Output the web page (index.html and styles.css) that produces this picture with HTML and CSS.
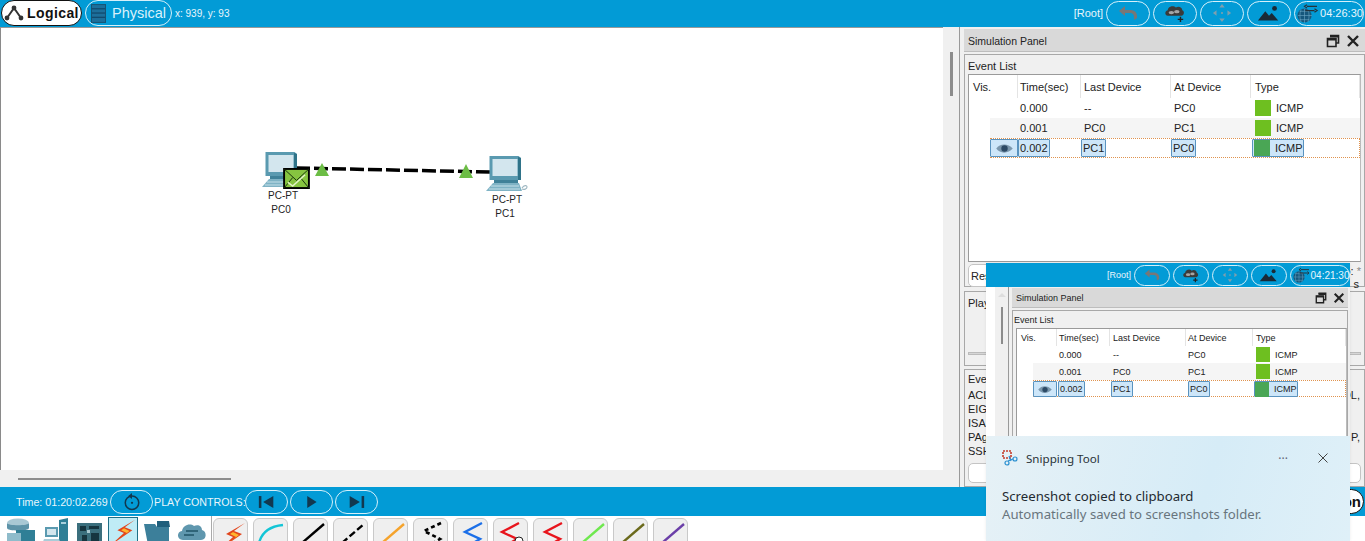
FILE: index.html
```html
<!DOCTYPE html>
<html lang="en">
<head>
<meta charset="utf-8">
<title>Packet Tracer Simulation</title>
<link rel="stylesheet" href="styles.css">
</head>
<body>
<svg class="defs" width="0" height="0" aria-hidden="true">
  <defs>
    <symbol id="i-logical" viewBox="0 0 20 18"><path d="M10 4 3 14M10 4l7 10" fill="none" stroke="#333" stroke-width="2"/><circle cx="10" cy="4" r="2.4" fill="#333"/><circle cx="3" cy="14" r="2.4" fill="#333"/><circle cx="17" cy="14" r="2.4" fill="#333"/></symbol>
    <symbol id="i-physical" viewBox="0 0 16 20"><rect x=".5" y=".5" width="15" height="19" fill="#1d6f9b" stroke="#1a4f6e"/><path d="M1 5h14M1 9.500h14M1 14h14" stroke="#0d3d5c"/></symbol>
    <symbol id="i-undo" viewBox="0 0 24 20"><path d="M9 3 3 8l6 5V10h5c3 0 4 2 4 4v3l3-2v-2c0-4-3-6-7-6H9z" fill="#777"/></symbol>
    <symbol id="i-cloud" viewBox="0 0 26 22"><path d="M5 14c-3 0-4-5 0-6 0-4 6-6 9-3 3-2 7 0 7 3 3 1 2 6-1 6z" fill="#3a3a3a"/><ellipse cx="9" cy="10.500" rx="3" ry="1.800" fill="#a5a5a5"/><ellipse cx="15" cy="9.500" rx="3" ry="1.800" fill="#a5a5a5"/><path d="M19 15v6M16 18h6" stroke="#222" stroke-width="1.600"/></symbol>
    <symbol id="i-move" viewBox="0 0 22 22"><path d="M11 1l3 4H8zM11 21l-3-4h6zM1 11l4-3v6zM21 11l-4 3V8z" fill="#7f9fae"/><circle cx="11" cy="11" r="1.200" fill="#7f9fae"/></symbol>
    <symbol id="i-image" viewBox="0 0 26 20"><path d="M1 18 9 8l4 5 3-3 7 8z" fill="#1a2a36"/><circle cx="19" cy="5" r="2.600" fill="#1a2a36"/></symbol>
    <symbol id="i-globe" viewBox="0 0 26 24"><circle cx="10" cy="15" r="8.500" fill="#16577c"/><path d="M2 15h17M10 7v17M4 10h12M4 20h12M6 8c-2 4-2 10 0 15M14 8c2 4 2 10 0 15" stroke="#6fa9c6" stroke-width=".7" fill="none"/><path d="M13 4h12M13 2l-3 2 3 2M11 9h11M22 7l3 2-3 2" stroke="#26323a" stroke-width="1.500" fill="none"/></symbol>
    <symbol id="i-reset" viewBox="0 0 24 24"><circle cx="12" cy="13" r="9" fill="none" stroke="#12384f" stroke-width="2"/><circle cx="12" cy="13" r="1.500" fill="#12384f"/><path d="M12 0l-5 4 5 4z" fill="#12384f"/></symbol>
    <symbol id="i-back" viewBox="0 0 20 16"><rect x="1" y="1" width="3" height="14" fill="#12384f"/><path d="M18 1v14L6 8z" fill="#12384f"/></symbol>
    <symbol id="i-play" viewBox="0 0 20 16"><path d="M5 1v14l11-7z" fill="#12384f"/></symbol>
    <symbol id="i-next" viewBox="0 0 20 16"><rect x="16" y="1" width="3" height="14" fill="#12384f"/><path d="M2 1v14l12-7z" fill="#12384f"/></symbol>
    <symbol id="i-pc" viewBox="0 0 42 38"><path d="M3.500 1h29l2.500 2v22H3.500z" fill="#5a9ab0"/><path d="M6.500 4h25v17h-25z" fill="#d3e6ee"/><path d="M32 2l3 1v22h-3z" fill="#2f7389"/><path d="M8 25h24v3H8z" fill="#3f8198"/><path d="M7 28h26l3 8H0z" fill="#7fb3c5"/><path d="M5 31h28M3 34h31" stroke="#c5e0e9"/><path d="M36 33c2-3 5-3 5-1s-3 3-5 2" fill="none" stroke="#9db6c0" stroke-width="1.200"/></symbol>
    <symbol id="i-mail" viewBox="0 0 28 22"><rect x="1" y="1" width="26" height="20" fill="#86c440" stroke="#000" stroke-width="2"/><path d="M1 1l13 12L27 1M1 21l9-11M27 21l-9-11" stroke="#16300c" fill="none"/><path d="M5 15l5 4L23 7" stroke="#e4f5c8" fill="none" stroke-width="1.500"/></symbol>
    <symbol id="i-eye" viewBox="0 0 20 12"><path d="M1 6c4-6 13-6 18 0-5 6-14 6-18 0z" fill="#7b97ad"/><circle cx="10" cy="6" r="3.500" fill="#2c4a66"/></symbol>
    <symbol id="i-restore" viewBox="0 0 14 14"><path d="M4 1.500h8.500V9H10M1.500 4.500H10V12.500H1.500z" fill="none" stroke="#222" stroke-width="1.600"/><path d="M4 2.500h8.500M1.500 5.500H10" stroke="#222" stroke-width="2"/></symbol>
    <symbol id="i-close" viewBox="0 0 14 14"><path d="M2 2l10 10M12 2 2 12" stroke="#222" stroke-width="2.400"/></symbol>
    <symbol id="i-bolt" viewBox="0 0 30 30"><path d="M28 2 9 13l7 3L2 29l23-16-8-3z" fill="#e2451c"/><path d="M22 7l-9 6 6 3-9 7 12-9-6-3z" fill="#ffb52e"/></symbol>
  </defs>
</svg>

<header class="topbar">
  <button class="pill pill-logical"><svg class="ico-logical"><use href="#i-logical"/></svg>Logical</button>
  <button class="pill pill-physical"><svg class="ico-physical"><use href="#i-physical"/></svg>Physical</button>
  <span class="coords">x: 939, y: 93</span>
  <span class="root">[Root]</span>
  <button class="pill pill-nav"><svg class="ico-nav"><use href="#i-undo"/></svg></button>
  <button class="pill pill-nav"><svg class="ico-nav"><use href="#i-cloud"/></svg></button>
  <button class="pill pill-nav"><svg class="ico-nav"><use href="#i-move"/></svg></button>
  <button class="pill pill-nav"><svg class="ico-nav"><use href="#i-image"/></svg></button>
  <button class="pill pill-clock"><svg class="ico-nav"><use href="#i-globe"/></svg>04:26:30</button>
</header>

<main class="workspace">
  <section class="canvas-wrap">
    <div class="canvas">
      <svg class="link" width="943" height="443"><path d="M296 141 490 145" stroke="#000" stroke-width="3.500" stroke-dasharray="14 4" fill="none"/><path d="M322 136l7 13h-14zM466 137l7 14h-14z" fill="#6cbd45"/></svg>
      <div class="node node-a"><svg class="pc"><use href="#i-pc"/></svg><span>PC-PT</span><span>PC0</span></div>
      <div class="node node-b"><svg class="pc"><use href="#i-pc"/></svg><span>PC-PT</span><span>PC1</span></div>
      <svg class="envelope"><use href="#i-mail"/></svg>
    </div>
    <div class="hscroll"><span class="hthumb"></span></div>
  </section>
  <div class="vscroll"><span class="vthumb"></span></div>

  <aside class="side">
    <div class="panel-head"><span>Simulation Panel</span><svg class="ico-win"><use href="#i-restore"/></svg><svg class="ico-win"><use href="#i-close"/></svg></div>
    <section class="group group-events">
      <div class="group-label">Event List</div>
      <div class="evt">
        <div class="evt-row evt-head"><span class="c-vis">Vis.</span><span class="c-time">Time(sec)</span><span class="c-last">Last Device</span><span class="c-at">At Device</span><span class="c-type">Type</span></div>
        <div class="evt-row"><span class="c-pad"></span><span class="c-eye"></span><span class="c-time">0.000</span><span class="c-last">--</span><span class="c-at">PC0</span><span class="c-type"><i class="swatch"></i>ICMP</span></div>
        <div class="evt-row evt-alt"><span class="c-pad"></span><span class="c-eye"></span><span class="c-time">0.001</span><span class="c-last">PC0</span><span class="c-at">PC1</span><span class="c-type"><i class="swatch"></i>ICMP</span></div>
        <div class="evt-row evt-sel"><span class="c-eye hl"><svg class="eye"><use href="#i-eye"/></svg></span><span class="c-time"><b class="hl">0.002</b></span><span class="c-last"><b class="hl">PC1</b></span><span class="c-at"><b class="hl">PC0</b></span><span class="c-type"><b class="hl hl-type"><i class="swatch swatch-dark"></i>ICMP</b></span></div>
      </div>
      <div class="reset-row">
        <button class="soft-btn reset-btn">Reset Simulation</button>
        <div class="capture"><span>o: <em>*</em></span><span class="capture-unit">s</span></div>
      </div>
    </section>
    <section class="group group-play">
      <div class="group-label">Playback</div>
      <span class="slider"></span>
    </section>
    <section class="group group-filter">
      <div class="group-label">Events</div>
      <div class="filter-line"><span>ACL Filter</span><span>OL,</span></div>
      <div class="filter-line"><span>EIGRP</span></div>
      <div class="filter-line"><span>ISAKMP</span></div>
      <div class="filter-line"><span>PAgP</span><span>P,</span></div>
      <div class="filter-line"><span>SSH</span></div>
      <button class="soft-btn filter-btn">Edit Filters</button>
    </section>
  </aside>
</main>

<footer class="playbar">
  <span class="time">Time: 01:20:02.269</span>
  <button class="pill pill-ctl pill-reset"><svg class="ico-reset"><use href="#i-reset"/></svg></button>
  <span class="play-label">PLAY CONTROLS:</span>
  <button class="pill pill-ctl"><svg class="ico-ctl"><use href="#i-back"/></svg></button>
  <button class="pill pill-ctl"><svg class="ico-ctl"><use href="#i-play"/></svg></button>
  <button class="pill pill-ctl"><svg class="ico-ctl"><use href="#i-next"/></svg></button>
  <button class="pill pill-sim">Simulation</button>
</footer>

<nav class="toolbar">
  <div class="cats">
    <svg class="cat cat-a" viewBox="0 0 31 27" preserveAspectRatio="xMinYMin"><ellipse cx="13" cy="5" rx="11" ry="4.500" fill="#a9c8d4"/><path d="M2 5v5c0 3.500 22 3.500 22 0V5c0 3-22 3-22 0z" fill="#5d93a8"/><path d="M11 12h19v14H11z" fill="#2f7f96"/><path d="M2 15h14v11H2z" fill="#8fbccb"/></svg>
    <svg class="cat cat-b" viewBox="0 0 29 27" preserveAspectRatio="xMinYMin"><path d="M17 2l9-2v27h-9z" fill="#2f7f96"/><path d="M19 4h5v2h-5z" fill="#a9d0dc"/><path d="M3 9h13v10H3z" fill="#5a9ab0"/><path d="M5 11h9v6H5z" fill="#d3e6ee"/><path d="M2 21h15l2 5H0z" fill="#a9ccd8"/></svg>
    <svg class="cat cat-c" viewBox="0 0 25 27" preserveAspectRatio="xMinYMin"><path d="M0 5h25v22H0z" fill="#3b6f7d"/><path d="M3 8h6v5H3zM12 8h10v3H12zM5 17h5v6H5zM14 15h8v8h-8z" fill="#16353f"/><path d="M10 12h3v3h-3z" fill="#a9c8d0"/></svg>
    <span class="cat-active"><svg class="cat-bolt"><use href="#i-bolt"/></svg></span>
    <svg class="cat cat-d" viewBox="0 0 27 27" preserveAspectRatio="xMinYMin"><path d="M0 6h11l2 3h12v18H4z" fill="#3c7f9a"/><path d="M13 3h12l1 6H13z" fill="#1f5f7c"/></svg>
    <svg class="cat cat-e" viewBox="0 0 29 27" preserveAspectRatio="xMinYMin"><path d="M6 22c-6 0-7-8-1-9 1-6 8-8 12-5 4-2 8 0 8 4 5 1 5 10-1 10z" fill="#5f97ae"/><path d="M9 13h12M7 17h10" stroke="#2f6478" stroke-width="2"/></svg>
  </div>
  <div class="conns">
    <span class="conn"><svg class="conn-svg" viewBox="0 0 33 30"><use href="#i-bolt" x="3" y="2" width="30" height="30"/></svg></span>
    <span class="conn"><svg class="conn-svg" viewBox="0 0 33 30"><path d="M5 24Q9 8 29 6" stroke="#13c5d6" stroke-width="2.400" fill="none"/></svg></span>
    <span class="conn"><svg class="conn-svg" viewBox="0 0 33 30"><path d="M8 24 30 5" stroke="#000" stroke-width="2.400"/></svg></span>
    <span class="conn"><svg class="conn-svg" viewBox="0 0 33 30"><path d="M8 24 30 5" stroke="#000" stroke-width="2.400" stroke-dasharray="7 3"/></svg></span>
    <span class="conn"><svg class="conn-svg" viewBox="0 0 33 30"><path d="M8 24 30 5" stroke="#f5a32c" stroke-width="2.400"/></svg></span>
    <span class="conn"><svg class="conn-svg" viewBox="0 0 33 30"><path d="M27 4 10 12l16 8-10 6" stroke="#000" stroke-width="2.600" fill="none" stroke-dasharray="4 3"/></svg></span>
    <span class="conn"><svg class="conn-svg" viewBox="0 0 33 30"><path d="M28 4 11 13l15 7-10 6" stroke="#1b6fe8" stroke-width="2.400" fill="none"/></svg></span>
    <span class="conn"><svg class="conn-svg" viewBox="0 0 33 30"><path d="M25 4 8 13l15 7-10 6" stroke="#e8141c" stroke-width="2.400" fill="none"/><circle cx="25" cy="22" r="4" fill="#fff" stroke="#222"/></svg></span>
    <span class="conn"><svg class="conn-svg" viewBox="0 0 33 30"><path d="M28 4 11 13l15 7-10 6" stroke="#e8141c" stroke-width="2.400" fill="none"/></svg></span>
    <span class="conn"><svg class="conn-svg" viewBox="0 0 33 30"><path d="M8 24 30 5" stroke="#6fe84f" stroke-width="2.400"/></svg></span>
    <span class="conn"><svg class="conn-svg" viewBox="0 0 33 30"><path d="M8 24 30 5" stroke="#6b6a1c" stroke-width="2.400"/></svg></span>
    <span class="conn"><svg class="conn-svg" viewBox="0 0 33 30"><path d="M8 24 30 5" stroke="#6b3fa8" stroke-width="2.400"/></svg></span>
  </div>
</nav>

<!-- pasted screenshot window lying over the panel -->
<section class="overlay">
  <div class="ov-bar">
    <span class="root ov-root">[Root]</span>
    <button class="pill ov-pill"><svg class="ico-ov"><use href="#i-undo"/></svg></button>
    <button class="pill ov-pill"><svg class="ico-ov"><use href="#i-cloud"/></svg></button>
    <button class="pill ov-pill"><svg class="ico-ov"><use href="#i-move"/></svg></button>
    <button class="pill ov-pill"><svg class="ico-ov"><use href="#i-image"/></svg></button>
    <button class="pill ov-clock"><svg class="ico-ov"><use href="#i-globe"/></svg>04:21:30</button>
  </div>
  <div class="ov-body">
    <div class="ov-scroll"><span class="ov-arrow"></span><span class="ov-thumb"></span></div>
    <div class="ov-side">
      <div class="panel-head ov-head"><span>Simulation Panel</span><svg class="ico-win"><use href="#i-restore"/></svg><svg class="ico-win"><use href="#i-close"/></svg></div>
      <section class="group ov-group">
        <div class="group-label">Event List</div>
        <div class="evt evt-small">
          <div class="evt-row evt-head"><span class="c-vis">Vis.</span><span class="c-time">Time(sec)</span><span class="c-last">Last Device</span><span class="c-at">At Device</span><span class="c-type">Type</span></div>
          <div class="evt-row"><span class="c-pad"></span><span class="c-eye"></span><span class="c-time">0.000</span><span class="c-last">--</span><span class="c-at">PC0</span><span class="c-type"><i class="swatch"></i>ICMP</span></div>
          <div class="evt-row evt-alt"><span class="c-pad"></span><span class="c-eye"></span><span class="c-time">0.001</span><span class="c-last">PC0</span><span class="c-at">PC1</span><span class="c-type"><i class="swatch"></i>ICMP</span></div>
          <div class="evt-row evt-sel"><span class="c-eye hl"><svg class="eye"><use href="#i-eye"/></svg></span><span class="c-time"><b class="hl">0.002</b></span><span class="c-last"><b class="hl">PC1</b></span><span class="c-at"><b class="hl">PC0</b></span><span class="c-type"><b class="hl hl-type"><i class="swatch swatch-dark"></i>ICMP</b></span></div>
        </div>
      </section>
    </div>
  </div>
  <div class="toast">
    <div class="toast-head">
      <svg class="toast-ico" viewBox="0 0 16 16"><path d="M1 1h8v7H1z" fill="none" stroke="#c43d2b" stroke-width="1.600" stroke-dasharray="2 1"/><circle cx="5" cy="13" r="2" fill="none" stroke="#2a8fd0" stroke-width="1.200"/><circle cx="13" cy="9" r="2" fill="none" stroke="#2a8fd0" stroke-width="1.200"/><path d="M6 11l5-2M7 6l2 5" stroke="#2a8fd0" stroke-width="1.200"/></svg>
      <span class="toast-app">Snipping Tool</span>
      <span class="toast-more">···</span>
      <svg class="toast-x" viewBox="0 0 10 10"><path d="M.5.500l9 9M9.500.500l-9 9" stroke="#444" fill="none"/></svg>
    </div>
    <div class="toast-title">Screenshot copied to clipboard</div>
    <div class="toast-sub">Automatically saved to screenshots folder.</div>
  </div>
</section>
</body>
</html>
```

FILE: styles.css
```css
* { box-sizing: border-box; }
html, body { margin: 0; height: 541px; overflow: hidden; }
body {
  position: relative;
  display: flex;
  flex-direction: column;
  font-family: "Liberation Sans", Arial, sans-serif;
  font-size: 11px;
  color: #222;
  background: #f0f0f0;
}
.defs { position: absolute; }
button { font-family: inherit; padding: 0; cursor: default; }

/* shared pill button */
.pill {
  display: flex;
  align-items: center;
  justify-content: center;
  flex: none;
  background: transparent;
  border: 1px solid #d6f0fa;
  border-radius: 13px;
  color: #e8f6fc;
}

/* top bar */
.topbar {
  flex: none;
  height: 27px;
  display: flex;
  align-items: center;
  padding: 0 0 1px 1px;
  background: #029bd6;
  color: #e8f6fc;
}
.pill-logical {
  width: 81px;
  height: 26px;
  gap: 3px;
  background: #fff;
  border: 1px solid #111;
  color: #111;
  font-size: 14px;
  font-weight: bold;
  letter-spacing: .4px;
}
.ico-logical { width: 20px; height: 18px; }
.pill-physical {
  width: 87px;
  height: 26px;
  margin-left: 3px;
  gap: 6px;
  font-size: 14.500px;
  color: #d9f1fb;
}
.ico-physical { width: 15px; height: 19px; }
.coords { margin-left: 3px; font-size: 10px; }
.root { margin-left: auto; margin-right: 3px; font-size: 11px; }
.pill-nav { width: 44px; height: 25px; margin-right: 3px; }
.ico-nav { width: 24px; height: 20px; flex: none; }
.pill-clock {
  width: 70px;
  margin-right: 1px;
  height: 25px;
  gap: 1px;
  font-size: 11px;
  white-space: nowrap;
}

/* work area */
.workspace { flex: none; height: 460px; display: flex; }
.canvas-wrap { flex: none; width: 943px; display: flex; flex-direction: column; }
.canvas {
  position: relative;
  flex: none;
  height: 443px;
  background: #fff;
  border-left: 1px solid #8a8a8a;
  border-top: 1px solid #999;
}
.link { position: absolute; left: -1px; top: -1px; }
.node {
  position: absolute;
  display: flex;
  flex-direction: column;
  align-items: center;
  width: 44px;
  font-size: 10px;
  line-height: 14px;
  color: #222;
}
.node span + span { margin-right: 4px; }
.node-a { left: 260px; top: 123px; }
.node-b { left: 484px; top: 127px; }
.pc { width: 42px; height: 38px; }
.envelope { position: absolute; left: 281px; top: 140px; width: 29px; height: 21px; }
.hscroll { flex: 1; display: flex; align-items: center; padding-left: 18px; }
.hthumb { width: 213px; height: 2px; background: #8c8c8c; }
.vscroll { flex: none; width: 17px; padding: 25px 0 0 7px; border-right: 1px solid #999; }
.vthumb { display: block; width: 3px; height: 44px; background: #8c8c8c; }

/* side panel */
.side { flex: 1; min-width: 0; padding: 2px 0 0 4px; display: flex; flex-direction: column; }
.panel-head {
  flex: none;
  height: 23px;
  display: flex;
  align-items: center;
  gap: 6px;
  padding: 1px 5px 0 4px;
  background: #d9d9d9;
  border-bottom: 1px solid #bdbdbd;
  font-size: 10.500px;
}
.panel-head span { margin-right: auto; }
.ico-win { width: 14px; height: 14px; }
.group { border: 1px solid #a8a8a8; background: #f0f0f0; flex: none; padding: 0 3px; }
.group-label { line-height: 13px; }
.group-events { margin-top: 2px; height: 233px; padding-top: 5px; }
.group-play { margin-top: 4px; height: 75px; padding-top: 5px; display: flex; flex-direction: column; }
.group-filter { margin-top: 3px; height: 118px; padding-top: 3px; }
.slider { margin-top: 42px; height: 3px; background: #d6d6d6; border: 1px solid #bbb; }

/* event table */
.evt {
  --vis: 21px;
  --eye: 28px;
  --time: 63px;
  --last: 90px;
  --at: 80px;
  --rowh: 20px;
  --swatch: 16px;
  --hl-h: 18px;
  --sel-inset: 0px;
  height: 188px;
  margin-top: 1px;
  background: #fff;
  border: 1px solid #9a9a9a;
  border-right-color: #bbb;
}
.evt-row {
  display: grid;
  grid-template-columns: var(--vis) var(--eye) var(--time) var(--last) var(--at) 1fr;
  height: var(--rowh);
  align-items: center;
}
.evt-head { height: 23px; grid-template-columns: calc(var(--vis) + var(--eye)) var(--time) var(--last) var(--at) 1fr; }
.evt-head span { height: 100%; display: flex; align-items: center; border-right: 1px solid #e4e4e4; }
.c-vis { padding-left: 4px; }
.c-time { padding-left: 2px; }
.c-last, .c-at { padding-left: 3px; }
.c-type { display: flex; align-items: center; gap: 5px; padding-left: 4px; }
.evt-alt { background: linear-gradient(#f5f5f5, #f5f5f5) no-repeat right / calc(100% - var(--vis)) 100%; }
.evt-sel {
  margin-left: var(--vis);
  grid-template-columns: var(--eye) var(--time) var(--last) var(--at) 1fr;
  border: 1px dotted #e0934f;
  border-left: 0;
}
.evt-sel .c-time, .evt-sel .c-last, .evt-sel .c-at { padding-left: var(--sel-inset); }
.evt-sel .c-type { padding-left: 1px; }
.swatch { display: block; flex: none; width: var(--swatch); height: 16px; background: #6ebf20; }
.swatch-dark { background: #4aa655; }
.hl {
  font-weight: normal;
  display: inline-flex;
  align-items: center;
  height: var(--hl-h);
  padding: 0 1px;
  background: #cde6f9;
  border: 1px solid #5a93bf;
  border-radius: 1px;
}
.c-eye.hl { justify-content: center; padding: 0; }
.c-eye:not(.hl) { height: 100%; }
.hl-type { gap: 5px; padding: 0 0 0 1px; }
.eye { width: 19px; height: 11px; }

/* reset row, filter */
.reset-row { display: flex; justify-content: space-between; margin-top: 2px; height: 23px; }
.soft-btn {
  background: #fff;
  border: 1px solid #c4c4c4;
  border-radius: 5px;
  font-size: 11px;
  color: #222;
  text-align: left;
}
.reset-btn { width: 120px; padding-left: 2px; }
.capture { display: flex; flex-direction: column; align-items: flex-end; line-height: 13px; padding-top: 1px; }
.capture em { color: #888; font-style: normal; }
.capture-unit { padding-right: 2px; }
.filter-line { display: flex; justify-content: space-between; line-height: 14px; padding-right: 1px; }
.group-filter .group-label { margin-bottom: 2px; }
.filter-btn { display: block; width: 100%; height: 20px; margin-top: 5px; text-align: center; }

/* play bar */
.playbar {
  flex: none;
  height: 29px;
  display: flex;
  align-items: center;
  padding-left: 16px;
  background: #029bd6;
  color: #e8f6fc;
  font-size: 10.700px;
  white-space: nowrap;
}
.time { flex: none; width: 94px; }
.pill-ctl { width: 43px; height: 24px; margin-right: 2px; }
.pill-reset { margin-right: 1px; }
.play-label { flex: none; width: 91px; }
.ico-reset { width: 18px; height: 18px; }
.ico-ctl { width: 17px; height: 14px; }
.pill-sim {
  margin-left: auto;
  margin-right: 1px;
  width: 90px;
  height: 25px;
  justify-content: flex-end;
  padding-right: 2px;
  background: #fff;
  border: 1px solid #111;
  color: #111;
  font-size: 15px;
  font-weight: bold;
}

/* bottom tool bar */
.toolbar {
  flex: none;
  height: 25px;
  display: flex;
  background: #fff;
  overflow: hidden;
}
.cats {
  flex: none;
  width: 212px;
  display: flex;
  gap: 6px;
  padding: 2px 0 0 5px;
  border-right: 1px solid #aaa;
}
.cat { height: 27px; flex: none; }
.cat-a { width: 31px; }
.cat-b { width: 29px; }
.cat-c { width: 25px; }
.cat-d { width: 27px; }
.cat-e { width: 29px; }
.cat-active {
  flex: none;
  width: 30px;
  height: 30px;
  margin-top: -1px;
  background: #bfecf6;
  border: 1px solid #1f6f86;
}
.cat-bolt { display: block; width: 28px; height: 28px; }
.conns { display: flex; gap: 5px; padding: 2px 0 0 1px; }
.conn {
  flex: none;
  width: 35px;
  height: 34px;
  background: #efefef;
  border: 1px solid #c9c9c9;
  border-radius: 6px;
}
.conn-svg { display: block; width: 33px; height: 30px; }

/* overlaid screenshot window */
.overlay {
  position: absolute;
  left: 986px;
  top: 263px;
  width: 364px;
  height: 278px;
  display: flex;
  flex-direction: column;
  background: #fff;
  box-shadow: 0 0 3px rgba(0, 0, 0, .08);
  overflow: hidden;
}
.ov-bar {
  flex: none;
  height: 24px;
  display: flex;
  align-items: center;
  gap: 3px;
  background: #029bd6;
  color: #e8f6fc;
}
.ov-root { margin-right: 0; font-size: 9px; }
.ov-pill { width: 36px; height: 21px; }
.ico-ov { width: 20px; height: 16px; flex: none; }
.ov-clock { width: 60px; height: 21px; font-size: 10px; white-space: nowrap; }
.ov-body { flex: none; height: 149px; display: flex; padding-left: 9px; }
.ov-scroll {
  flex: none;
  width: 14px;
  display: flex;
  flex-direction: column;
  align-items: center;
  background: #f0f0f0;
  border-right: 1px solid #999;
  padding-top: 6px;
}
.ov-arrow { border: 4px solid transparent; border-top-width: 0; border-bottom: 4px solid #ddd; }
.ov-thumb { width: 2px; height: 37px; margin-top: 10px; background: #8c8c8c; }
.ov-side { flex: 1; min-width: 0; padding: 1px 2px 0 3px; background: #f0f0f0; display: flex; flex-direction: column; }
.ov-head { height: 20px; padding: 1px 3px 0 4px; font-size: 9px; }
.ov-head .ico-win { width: 12px; height: 12px; }
.ov-group { flex: 1; margin-top: 2px; padding: 3px 0 0 3px; font-size: 9px; border-bottom: 0; }
.ov-group .group-label { line-height: 12px; margin-left: -2px; }
.evt-small {
  --vis: 16px;
  --eye: 24px;
  --time: 53px;
  --last: 76px;
  --at: 67px;
  --rowh: 17px;
  --swatch: 14px;
  --hl-h: 16px;
  --sel-inset: 1px;
  height: 130px;
  margin-top: 2px;
  font-size: 9px;
}
.evt-small .evt-head { height: 17px; }
.evt-small .evt-sel .c-type { padding-left: 1px; }
.evt-small .hl-type { padding: 0; }
.evt-small .swatch { height: 15px; }
.evt-small .c-type { padding-left: 3px; }
.evt-small .c-at { padding-left: 2px; }
.evt-small .eye { width: 16px; height: 9px; }
.toast {
  flex: 1;
  padding: 14px 16px 0;
  font-family: "Noto Sans", "Open Sans", sans-serif;
  background: linear-gradient(105deg, #e6f1f6, #d6ecf7 60%, #dff0f8);
}
.toast-head { display: flex; align-items: center; height: 16px; }
.toast-ico { width: 16px; height: 16px; margin-right: 8px; }
.toast-app { font-size: 11.600px; color: #2a3338; }
.toast-more { margin-left: auto; margin-right: 30px; font-size: 12px; color: #667; }
.toast-x { width: 10px; height: 10px; margin-right: 6px; }
.toast-title { margin-top: 21px; font-size: 13.200px; line-height: 18px; color: #1f2a30; white-space: nowrap; }
.toast-sub { font-size: 13.200px; line-height: 19px; color: #68757d; white-space: nowrap; }
```
